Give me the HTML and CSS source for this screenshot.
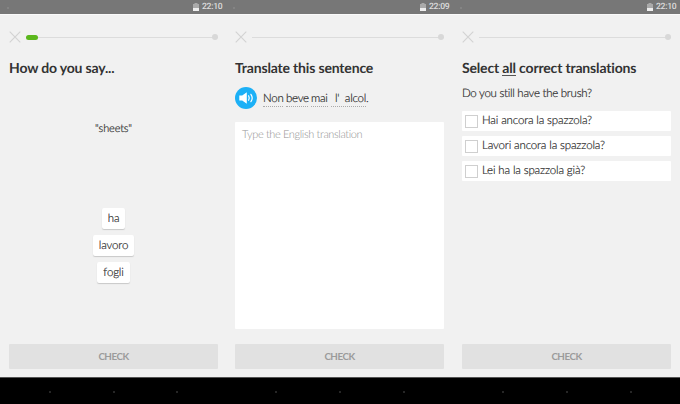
FILE: index.html
```
<!DOCTYPE html>
<html lang="en">
<head>
<meta charset="utf-8">
<title>Language exercises</title>
<link rel="stylesheet" href="styles.css">
</head>
<body>
<main class="phones">
  <section class="phone">
    <header class="status"><i class="notice"></i><svg class="battery" width="6" height="9" viewBox="0 0 6 9"><path fill="#aaa" d="M1.500 0h3v1H6v4H0V1h1.500z"/><path fill="#eee" d="M0 5h6v3H0z"/></svg><span class="time">22:10</span></header>
    <div class="screen">
      <div class="progress"><svg class="close" width="12" height="12" viewBox="0 0 12 12"><path d="M.7.7l10.600 10.600M11.300.7L.7 11.300"/></svg><div class="track"><i class="fill"></i><i class="end"></i></div></div>
      <h1 class="title t1">How do you say...</h1>
      <p class="prompt">"sheets"</p>
      <div class="words"><span class="word">ha</span><span class="word">lavoro</span><span class="word">fogli</span></div>
      <button class="check">CHECK</button>
    </div>
    <footer class="nav"><i></i><i></i><i></i></footer>
  </section>
  <section class="phone">
    <header class="status"><i class="notice"></i><svg class="battery" width="6" height="9" viewBox="0 0 6 9"><path fill="#aaa" d="M1.500 0h3v1H6v4H0V1h1.500z"/><path fill="#eee" d="M0 5h6v3H0z"/></svg><span class="time">22:09</span></header>
    <div class="screen">
      <div class="progress"><svg class="close" width="12" height="12" viewBox="0 0 12 12"><path d="M.7.7l10.600 10.600M11.300.7L.7 11.300"/></svg><div class="track"><i class="end"></i></div></div>
      <h1 class="title t2">Translate this sentence</h1>
      <div class="sentence">
        <svg class="speaker" width="22" height="22" viewBox="0 0 22 22"><circle cx="11" cy="11" r="11" fill="#1cb0f6"/><path fill="#fff" d="M4.300 8.600h2.900l4.600-3.300v11.400l-4.600-3.300H4.300z"/><path fill="none" stroke="#fff" stroke-width="1.200" stroke-linecap="round" d="M13.600 8.800q1.300 2.200 0 4.400M15.900 7.300q2.600 3.700 0 7.400"/></svg>
        <span class="hint w1">Non</span><span class="hint w2">beve</span><span class="hint w3">mai</span><span class="hint w4"><span>l'</span><span>alcol</span></span><span class="stop">.</span>
      </div>
      <div class="answer">Type the English translation</div>
      <button class="check">CHECK</button>
    </div>
    <footer class="nav"><i></i><i></i><i></i></footer>
  </section>
  <section class="phone">
    <header class="status"><i class="notice"></i><svg class="battery" width="6" height="9" viewBox="0 0 6 9"><path fill="#aaa" d="M1.500 0h3v1H6v4H0V1h1.500z"/><path fill="#eee" d="M0 5h6v3H0z"/></svg><span class="time">22:10</span></header>
    <div class="screen">
      <div class="progress"><svg class="close" width="12" height="12" viewBox="0 0 12 12"><path d="M.7.7l10.600 10.600M11.300.7L.7 11.300"/></svg><div class="track"><i class="end"></i></div></div>
      <h1 class="title t3">Select <span class="all">all</span> correct translations</h1>
      <p class="question">Do you still have the brush?</p>
      <div class="options">
        <div class="option"><i class="box"></i><span>Hai ancora la spazzola?</span></div>
        <div class="option"><i class="box"></i><span>Lavori ancora la spazzola?</span></div>
        <div class="option"><i class="box"></i><span>Lei ha la spazzola già?</span></div>
      </div>
      <button class="check">CHECK</button>
    </div>
    <footer class="nav"><i></i><i></i><i></i></footer>
  </section>
</main>
</body>
</html>
```
FILE: styles.css
```
* { box-sizing: border-box; }
body { margin: 0; font-family: Lato, "Open Sans", sans-serif; font-size: 11.5px; font-weight: 300; letter-spacing: -.15px; font-variant-ligatures: none; text-rendering: geometricPrecision; color: #222; background: #f1f1f1; }
.phones { display: grid; grid-template-columns: 226px 227px 227px; height: 404px; overflow: hidden; }
.phone { display: flex; flex-direction: column; height: 404px; }
.status { height: 14px; flex: none; background: #777; display: flex; align-items: center; padding: 1px 4px 0 0; color: #ddd; font: 500 8.6px/13px Roboto, sans-serif; }
.notice { width: 2px; height: 2px; margin: 0 auto 0 7px; background: #888; border-radius: 50%; }
.battery { margin-right: 3px; }
.time { width: 20px; white-space: nowrap; letter-spacing: -.3px; }
.screen { flex: 1; min-height: 0; padding: 16px 0 8px 9px; border-top: 1px solid #fafafa; display: flex; flex-direction: column; align-items: flex-start; }
.screen > * { width: 209px; flex: none; }
.progress { display: flex; align-items: center; height: 12px; }
.close { fill: none; stroke: #d2d2d2; stroke-width: 1.1; }
.track { display: flex; align-items: center; justify-content: space-between; width: 192px; height: 6px; margin-left: 5px; background: linear-gradient(#dcdcdc, #dcdcdc) 0 50% / 100% 1px no-repeat; }
.fill { width: 12px; height: 5px; border-radius: 3px; background: #5bb71c; }
.end { width: 6px; height: 6px; border-radius: 50%; background: #d8d8d8; margin-left: auto; }
.title { margin: 15px 0 0; font-size: 14px; line-height: 20px; font-weight: 700; letter-spacing: -.17px; color: #333; white-space: nowrap; }
.all { border-bottom: 1px solid #555; display: inline-block; line-height: 14px; }
.prompt, .words, .sentence, .question, .options { -webkit-text-stroke: .2px #333; }
.prompt { margin: 42px 0 0; text-align: center; line-height: 18px; font-size: 11px; }
.words { margin-top: 70px; display: flex; flex-direction: column; align-items: center; gap: 6px; }
.word { height: 21px; padding: 0 6px; line-height: 21px; background: #fff; border-radius: 2px; box-shadow: 0 1px 1px #c8c8c8; }
.screen > .check { margin-top: auto; height: 25px; padding: 0; border: 0; border-radius: 1px; background: #e1e1e1; color: #9b9b9b; font: 700 9.8px/25px Lato, sans-serif; letter-spacing: -.5px; }
.nav { height: 27px; flex: none; background: #000; border-top: 1px solid #555; display: flex; justify-content: space-between; align-items: center; padding: 2px 48px 0 49px; }
.nav i { width: 2px; height: 2px; border-radius: 50%; background: #333; }
.sentence { margin-top: 9px; display: flex; align-items: center; height: 22px; white-space: nowrap; }
.speaker { margin-right: 6px; flex: none; }
.hint { height: 15px; line-height: 14px; margin-right: 3px; border-bottom: 1px dotted #aaa; margin-top: 2px; letter-spacing: -.25px; }
.w1 { width: 20px; }
.w2 { width: 22px; }
.w3 { width: 17px; }
.w4 { width: 35px; display: flex; justify-content: space-between; padding-left: 4px; margin-right: 0; }
.stop { line-height: 18px; margin-top: 1px; }
.answer { margin-top: 13px; height: 207px; background: #fff; border-radius: 1px; padding: 4px 7px; line-height: 18px; font-size: 11px; letter-spacing: -.36px; color: #909090; }
.question { margin: 7px 0 0; line-height: 18px; letter-spacing: -.28px; }
.options { margin-top: 8px; display: grid; gap: 5px; }
.option { height: 20px; background: #fff; border-radius: 1px; display: flex; align-items: center; padding-left: 3px; line-height: 20px; white-space: nowrap; }
.box { width: 13px; height: 13px; border: 1px solid #cfcfcf; margin-right: 4px; }
```
